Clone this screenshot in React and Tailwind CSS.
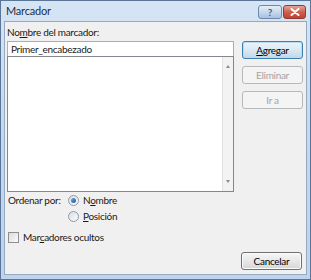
import React from "react";

function Btn({ children, focused, disabled, className = "" }) {
  const base =
    "flex h-[18px] w-[61px] items-center justify-center rounded-[3px] border text-[10px] leading-none";
  const look = disabled
    ? "border-[#b5b9bc] bg-[#f4f4f4] text-[#a3a3a3]"
    : focused
    ? "border-[#3c7fb1] bg-gradient-to-b from-[#eef5fb] via-[#dbe8f3] to-[#c3d7e8] text-black shadow-[inset_0_0_0_1px_#b8dcf4]"
    : "border-[#707070] bg-gradient-to-b from-[#f6f6f6] via-[#e8e8e8] to-[#d6d6d6] text-black shadow-[inset_0_0_0_1px_#fbfbfb]";
  return <div className={`${base} ${look} ${className}`}>{children}</div>;
}

function Radio({ checked, children }) {
  return (
    <div className="flex h-[16px] items-center gap-[4px]">
      <span className="flex h-[11px] w-[11px] items-center justify-center rounded-full border border-[#8f9aa5] bg-gradient-to-br from-[#dadfe4] to-[#fbfbfb]">
        {checked && (
          <span className="h-[5px] w-[5px] rounded-full bg-gradient-to-br from-[#6ea7da] to-[#1b5c9c]" />
        )}
      </span>
      <span>{children}</span>
    </div>
  );
}

export default function App() {
  return (
    <div
      className="flex h-[280px] w-[311px] flex-col border border-[#5a7595] bg-gradient-to-b from-[#d6e5f5] via-[#c3d7ee] to-[#bfd3ea] text-[10px] tracking-[-0.3px] text-[#1a1a1a]"
      style={{ fontFamily: 'Lato, "Liberation Sans", sans-serif' }}
    >
      {/* title bar */}
      <div className="flex h-[20px] items-center pl-[5px] pr-[4px]">
        <span className="text-[11px] tracking-[-0.2px] text-[#1e2f45]">Marcador</span>
        <div className="ml-auto flex items-center gap-[1px] pt-[1px]">
          <div className="flex h-[14px] w-[24px] items-center justify-center rounded-[3px] border border-[#6d88a8] bg-gradient-to-b from-[#e6eff9] via-[#c6d8ec] to-[#a9c2df] text-[10px] font-bold leading-none text-[#4b5e76]">
            ?
          </div>
          <div className="flex h-[14px] w-[23px] items-center justify-center rounded-[3px] border border-[#8a3c36] bg-gradient-to-b from-[#e4a596] via-[#cf5e4e] to-[#c4402f]">
            <svg width="10" height="8" viewBox="0 0 10 8">
              <path d="M1.5 1 L8.5 7 M8.5 1 L1.5 7" stroke="#fff" strokeWidth="2" strokeLinecap="round" />
            </svg>
          </div>
        </div>
      </div>

      {/* client area */}
      <div className="mx-[3px] mb-[4px] flex flex-1 flex-col border border-[#93a9c4] bg-[#f0f0f0] pb-[4px] pl-[2px] pr-[3px] pt-[3px]">
        <div className="h-[14px] leading-[14px]">
          No<span className="underline">m</span>bre del marcador:
        </div>
        <div className="mt-[2px] flex gap-[8px]">
          <div className="flex w-[227px] flex-col">
            <div className="flex h-[16px] items-center border border-[#abadb3] bg-white pl-[3px]">
              Primer_encabezado
            </div>
            <div className="-mt-px flex h-[136px] border border-[#828790] bg-white">
              <div className="flex-1" />
              <div className="flex w-[11px] flex-col items-center justify-between border-l border-[#e2e2e2] bg-[#f3f3f3] py-[8px]">
                <span className="h-0 w-0 border-x-[2.5px] border-b-[3px] border-x-transparent border-b-[#8a8a8a]" />
                <span className="h-0 w-0 border-x-[2.5px] border-t-[3px] border-x-transparent border-t-[#8a8a8a]" />
              </div>
            </div>
          </div>
          <div className="flex flex-col gap-[7px]">
            <Btn focused>
              <span className="underline">A</span>gregar
            </Btn>
            <Btn disabled>Eliminar</Btn>
            <Btn disabled>Ir a</Btn>
          </div>
        </div>

        <div className="flex pl-[1px]">
          <span className="w-[60px] whitespace-nowrap leading-[16px]">Ordenar por:</span>
          <div className="flex flex-col">
            <Radio checked>
              N<span className="underline">o</span>mbre
            </Radio>
            <Radio>
              <span className="underline">P</span>osición
            </Radio>
          </div>
        </div>

        <div className="mt-[5px] flex h-[16px] items-center gap-[4px] pl-[1px]">
          <span className="h-[11px] w-[11px] border border-[#8f8f8f] bg-gradient-to-br from-[#dcdcdc] to-[#fafafa]" />
          <span>
            Mar<span className="underline">c</span>adores ocultos
          </span>
        </div>

        <div className="mt-auto flex justify-end">
          <Btn className="mr-[1px]">Cancelar</Btn>
        </div>
      </div>
    </div>
  );
}
